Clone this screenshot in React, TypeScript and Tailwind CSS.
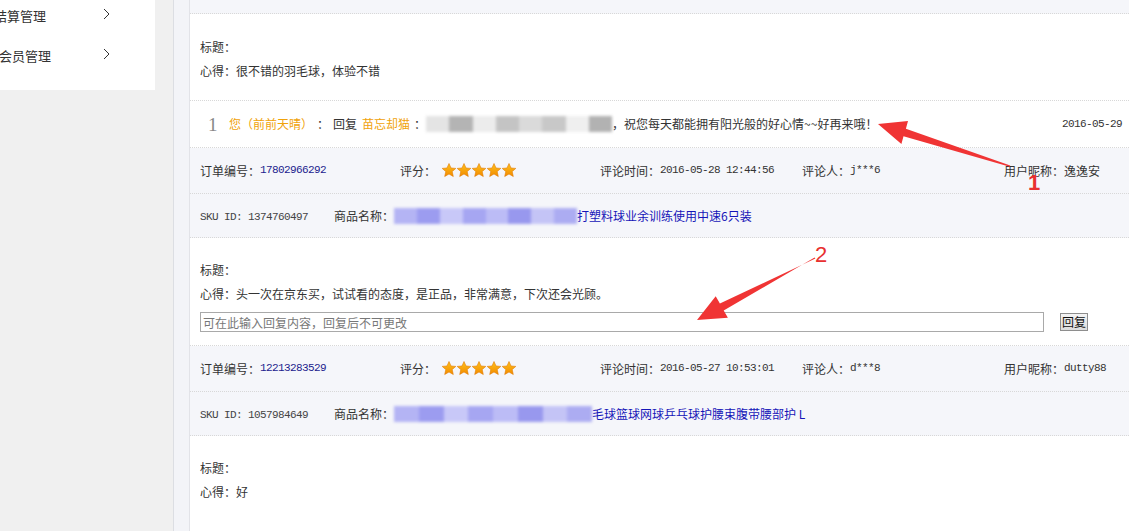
import type React from "react";

const Mono: React.FC<{ children: React.ReactNode; className?: string }> = ({
	children,
	className = "",
}) => (
	<span
		className={`font-['Liberation_Mono',monospace] text-[11px] tracking-[-0.6px] ${className}`}
	>
		{children}
	</span>
);

const Stars = (): React.JSX.Element => (
	<svg width="75" height="15" viewBox="0 0 75 15" className="ml-[6px]">
		<defs>
			<linearGradient id="starFill" x1="0" y1="0" x2="0" y2="1">
				<stop offset="0" stopColor="#ffc21a" />
				<stop offset="1" stopColor="#f28a00" />
			</linearGradient>
		</defs>
		{[0, 1, 2, 3, 4].map((i) => (
			<polygon
				key={i}
				transform={`translate(${i * 15} 0)`}
				points="7,0.5 9,5 13.8,5.4 10.2,8.6 11.3,13.5 7,11 2.7,13.5 3.8,8.6 0.2,5.4 5,5"
				fill="url(#starFill)"
				stroke="#e07a00"
				strokeWidth="0.6"
			/>
		))}
	</svg>
);

const Blur: React.FC<{ w: number; tone: "gray" | "blue" }> = ({ w, tone }) => {
	const colors =
		tone === "gray"
			? ["#e4e4e4", "#b4b4b4", "#ececec", "#c4c4c4", "#dadada", "#c8c8c8", "#efefef", "#b2b2b2"]
			: ["#b4b4f4", "#9c9cf0", "#c8c8f8", "#a6a6f2", "#bcbcf6", "#9898ee", "#c4c4f6", "#acacf2"];
	return (
		<span className="inline-flex h-[16px] overflow-hidden align-middle blur-[1.5px]" style={{ width: w }}>
			{colors.map((c, i) => (
				<span key={i} className="h-full flex-1" style={{ backgroundColor: c }} />
			))}
		</span>
	);
};

const OrderRow: React.FC<{
	order: string;
	time: string;
	who: string;
	nick: React.ReactNode;
}> = ({ order, time, who, nick }) => (
	<div className="flex h-[46px] items-center border-b border-dotted border-[#d8d8d8] bg-[#f5f6fa] pl-[10px]">
		<div className="flex w-[200px] items-center">
			订单编号：<Mono className="text-[#1c1c8e]">{order}</Mono>
		</div>
		<div className="flex w-[200px] items-center">
			评分：
			<Stars />
		</div>
		<div className="flex w-[202px] items-center">
			评论时间：<Mono>{time}</Mono>
		</div>
		<div className="flex w-[202px] items-center">
			评论人：<Mono>{who}</Mono>
		</div>
		<div className="flex items-center">用户昵称：{nick}</div>
	</div>
);

const SkuRow: React.FC<{ sku: string; blur: number; name: string }> = ({
	sku,
	blur,
	name,
}) => (
	<div className="flex h-[44px] items-center border-b border-dotted border-[#d8d8d8] bg-[#f5f6fa] pl-[10px]">
		<div className="w-[134px] text-[#444]">
			<Mono>SKU ID: {sku}</Mono>
		</div>
		<div className="flex items-center">
			商品名称：
			<Blur w={blur} tone="blue" />
			<span className="text-[#1515b8]">{name}</span>
		</div>
	</div>
);

const Block: React.FC<{ text: string; h: string; children?: React.ReactNode }> = ({
	text,
	h,
	children,
}) => (
	<div className={`border-b border-dotted border-[#d8d8d8] bg-white pl-[10px] leading-[24px] ${h}`}>
		<div>标题：</div>
		<div>心得：{text}</div>
		{children}
	</div>
);

export default function App(): React.JSX.Element {
	return (
		<div className="relative flex h-[531px] w-[1129px] overflow-hidden bg-[#f0f0f0] font-['Noto_Sans_CJK_SC',sans-serif] text-[12px] text-[#333]">
			<aside className="w-[155px] shrink-0">
				<div className="h-[90px] overflow-hidden bg-white text-[13px] text-[#333]">
					<div className="-mt-[4px] flex h-[40px] items-center justify-between pr-[44px]">
						<span className="-ml-[6px]">结算管理</span>
						<svg width="8" height="12" viewBox="0 0 8 12" className="-mt-[4px]">
							<polyline points="1,1 6,6 1,11" fill="none" stroke="#333" strokeWidth="1" />
						</svg>
					</div>
					<div className="flex h-[40px] items-center justify-between pr-[44px]">
						<span className="-ml-[1px]">会员管理</span>
						<svg width="8" height="12" viewBox="0 0 8 12" className="-mt-[4px]">
							<polyline points="1,1 6,6 1,11" fill="none" stroke="#333" strokeWidth="1" />
						</svg>
					</div>
				</div>
			</aside>
			<div className="w-[18px] shrink-0" />
			<main className="flex flex-1 border-l border-[#dcdee3] bg-[#f3f4f8] pl-[15px]">
				<section className="flex-1 border-l border-[#e2e3e8] bg-white">
					<div className="h-[14px] border-b border-dotted border-[#d8d8d8] bg-[#f5f6fa]" />
					<Block text="很不错的羽毛球，体验不错" h="h-[87px] pt-[21px]" />
					<div className="flex h-[47px] items-center justify-between border-b border-dotted border-[#d8d8d8] bg-white pl-[18px] pr-[7px]">
						<div className="flex items-center">
							<span className="w-[11px] font-['Liberation_Serif',serif] text-[19px] leading-none text-[#888]">1</span>
							<span className="ml-[10px] text-[#f0a20a]">您（前前天晴）</span>
							<span className="ml-[4px]">：</span>
							<span className="ml-[4px]">回复</span>
							<span className="ml-[5px] text-[#f0a20a]">苗忘却猫</span>
							<span className="ml-[4px]">：</span>
							<Blur w={186} tone="gray" />
							<span>，祝您每天都能拥有阳光般的好心情~~好再来哦！</span>
						</div>
						<Mono>2016-05-29</Mono>
					</div>
					<OrderRow order="17802966292" time="2016-05-28 12:44:56" who="j***6" nick="逸逸安" />
					<SkuRow sku="1374760497" blur={183} name="打塑料球业余训练使用中速6只装" />
					<Block text="头一次在京东买，试试看的态度，是正品，非常满意，下次还会光顾。" h="h-[108px] pt-[20px]">
						<div className="mt-[6px] flex items-center">
							<input
								className="h-[20px] w-[844px] border border-[#a9a9a9] bg-white px-[2px] text-[12px] leading-[18px] text-[#333] outline-none placeholder:text-[#777]"
								placeholder="可在此输入回复内容，回复后不可更改"
							/>
							<button className="ml-[16px] h-[18px] w-[28px] border border-[#8e8e8e] bg-[linear-gradient(#f4f4f4,#dcdcdc)] text-[12px] leading-[16px] text-[#111]">
								回复
							</button>
						</div>
					</Block>
					<OrderRow
						order="12213283529"
						time="2016-05-27 10:53:01"
						who="d***8"
						nick={<Mono>dutty88</Mono>}
					/>
					<SkuRow sku="1057984649" blur={198} name="毛球篮球网球乒乓球护腰束腹带腰部护 L" />
					<Block text="好" h="h-[108px] pt-[20px]" />
				</section>
			</main>

			<svg className="pointer-events-none absolute left-0 top-0" width="1129" height="531">
				<polygon
					points="1010.2,165.5 905.9,128.7 908,121 878,124 901.4,144 903.5,136.3 1009.8,166.8"
					fill="#f03434"
				/>
				<polygon
					points="815.4,258.6 719.9,303.5 715.7,296.3 697,320 727.9,317.7 723.7,310.5 814.6,257.4"
					fill="#f03434"
				/>
			</svg>
			<span className="absolute left-[1028px] top-[170px] font-['Liberation_Sans',sans-serif] text-[22px] font-bold leading-[26px] text-[#e83030]">
				1
			</span>
			<span className="absolute left-[815px] top-[242px] font-['Liberation_Sans',sans-serif] text-[22px] leading-[26px] text-[#e83030]">
				2
			</span>
		</div>
	);
}
